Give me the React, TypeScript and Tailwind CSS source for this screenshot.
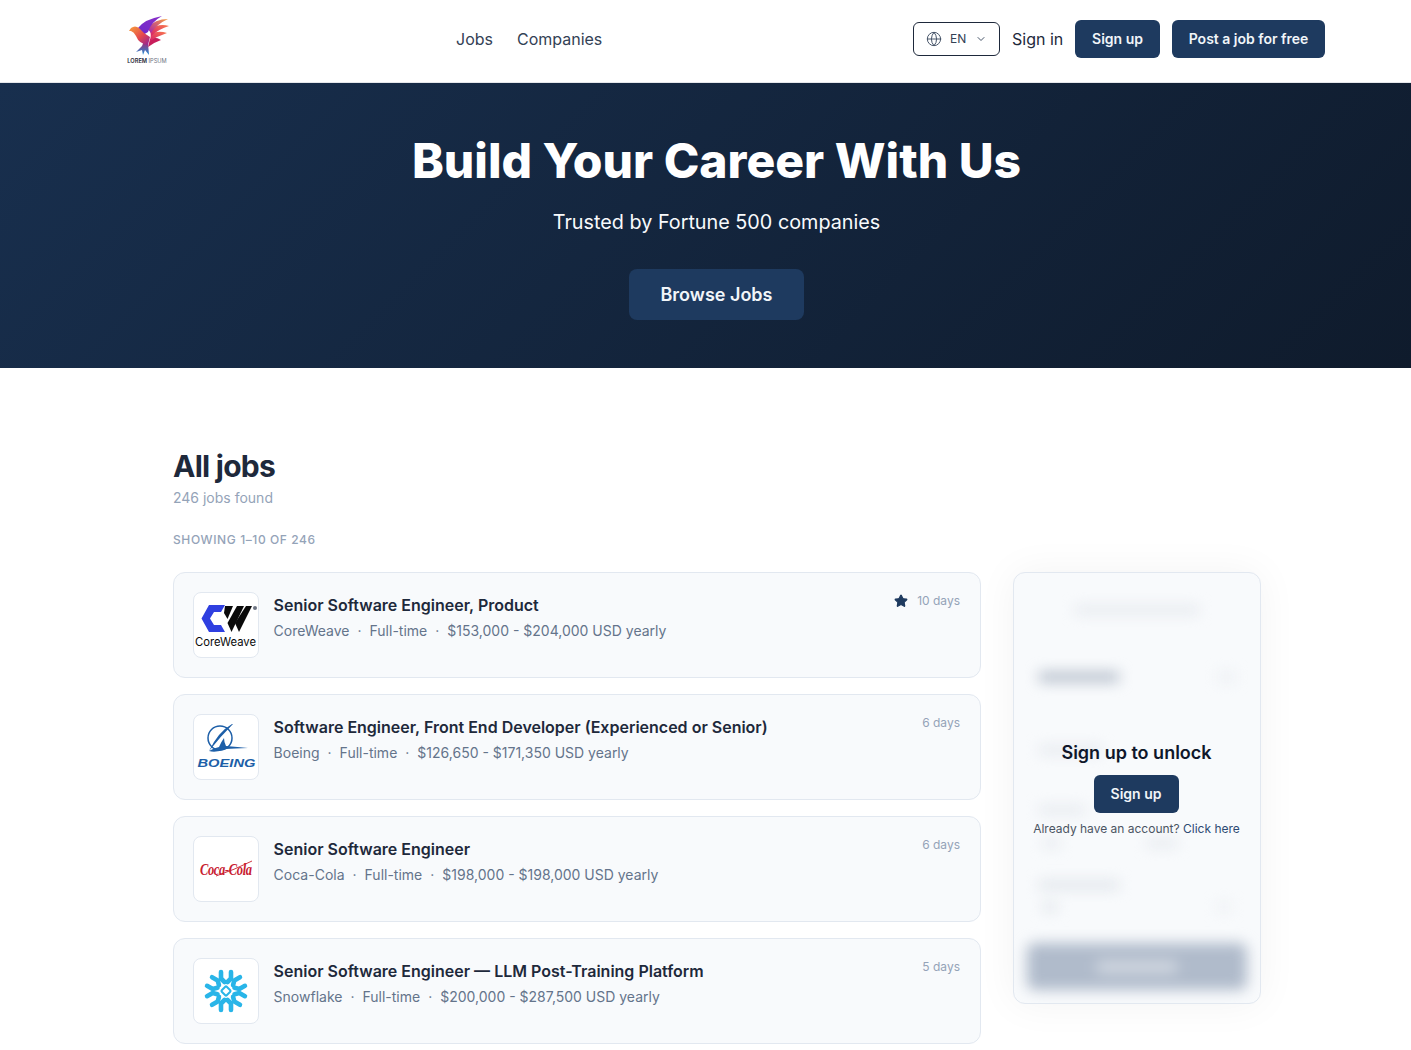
import React from 'react';
import { Globe, ChevronDown, Star } from 'lucide-react';

const Bird = () => (
  <svg viewBox="0 0 48 44" className="w-[48px] h-[44px]">
    <defs>
      <linearGradient id="head" x1="0" y1="0" x2="1" y2="1">
        <stop offset="0" stopColor="#f7a23b" />
        <stop offset="0.55" stopColor="#e5484d" />
        <stop offset="1" stopColor="#8d1f9c" />
      </linearGradient>
      <linearGradient id="f1" x1="0" y1="1" x2="1" y2="0">
        <stop offset="0" stopColor="#6d28c9" />
        <stop offset="1" stopColor="#8b2fc9" />
      </linearGradient>
      <linearGradient id="f2" x1="0" y1="1" x2="1" y2="0">
        <stop offset="0" stopColor="#a21caf" />
        <stop offset="1" stopColor="#f9a03f" />
      </linearGradient>
      <linearGradient id="f3" x1="0" y1="1" x2="1" y2="0">
        <stop offset="0" stopColor="#d61f69" />
        <stop offset="1" stopColor="#f97b4f" />
      </linearGradient>
      <linearGradient id="tail" x1="0" y1="0" x2="0" y2="1">
        <stop offset="0" stopColor="#b3206e" />
        <stop offset="1" stopColor="#1c8fd6" />
      </linearGradient>
    </defs>
    <path d="M25 30 L26 42 L22 37 L20 42 L19 37 L13 39 L19 33 L21 28 Z" fill="url(#tail)" />
    <path d="M27 26 Q32 23 38 27 Q32 29 25 34 Z" fill="#c81e5b" />
    <path d="M28 21 Q35 17 44 20 Q35 23 27 28 Z" fill="url(#f3)" />
    <path d="M27 17 Q35 10 46 13 Q36 16 28 23 Z" fill="url(#f3)" />
    <path d="M24 15 Q32 6 45 6 Q34 11 28 20 Z" fill="url(#f2)" />
    <path d="M15 15 Q22 6 39 3 Q28 9 25 19 L20 22 Z" fill="url(#f1)" />
    <path d="M6 18 L8 15 Q12 12 16 15 Q20 20 27 24 L25 32 Q16 31 13 23 Q11 19 8 18 Z" fill="url(#head)" />
  </svg>
);

const CoreWeaveLogo = () => (
  <svg viewBox="0 0 64 64" className="w-full h-full">
    <path d="M15 12 H31 L27 19 H20 L16 25.5 L20 32 H27 L31 39 H15 L7.5 25.5 Z" fill="#2f3fe0" />
    <path d="M31 13 H39 L33.5 26 L30 20 Z" fill="#0a0a0a" />
    <path d="M43 13 H50 L37.5 39 L33.5 30 Z" fill="#0a0a0a" />
    <path d="M52 13 H58 L45 39 L41 30 Z" fill="#0a0a0a" />
    <circle cx="61" cy="15" r="2" fill="#6b7280" />
    <text x="1" y="53" fontSize="11.5" textLength="61" lengthAdjust="spacingAndGlyphs" fill="#0a0a0a" fontFamily="Inter, sans-serif">CoreWeave</text>
  </svg>
);

const BoeingLogo = () => (
  <svg viewBox="0 0 64 64" className="w-full h-full">
    <circle cx="26" cy="23" r="12" fill="none" stroke="#1d5fa8" strokeWidth="1.5" />
    <path d="M38 9 Q24 17 15 36 Q26 22 39 9 Z" fill="#1d5fa8" />
    <path d="M15 36 Q20 33 25 32 Q27 27 30 23 Q30 27 32 31 Q44 32 54 33 Q40 33.5 32 34 Q22 38 15 36 Z" fill="#1d5fa8" />
    <text x="3.5" y="51.5" fontSize="10" fontWeight="900" fontStyle="italic" textLength="58" lengthAdjust="spacingAndGlyphs" fill="#1d5fa8" fontFamily="Liberation Sans, sans-serif">BOEING</text>
  </svg>
);

const CocaColaLogo = () => (
  <svg viewBox="0 0 64 64" className="w-full h-full">
    <text x="6" y="27" transform="scale(1 1.4)" fontSize="12.5" fontWeight="700" fontStyle="italic" textLength="52" lengthAdjust="spacing" fill="#c8202f" fontFamily="Liberation Serif, serif">Coca-Cola</text>
    <path d="M22 39 Q40 33 58 24" fill="none" stroke="#c8202f" strokeWidth="0.9" />
  </svg>
);

const SnowflakeLogo = () => (
  <svg viewBox="0 0 64 64" className="w-full h-full">
    {[0, 60, 120, 180, 240, 300].map((a) => (
      <g key={a} transform={`rotate(${a} 32 32)`} stroke="#29b5e8" strokeLinecap="round" strokeLinejoin="round" strokeWidth="4.6" fill="none">
        <path d="M27 13 V19.5 L30.5 23" />
        <path d="M37 13 V19.5 L33.5 23" />
      </g>
    ))}
    <rect x="28.5" y="28.5" width="7" height="7" rx="1" transform="rotate(45 32 32)" fill="#fff" stroke="#29b5e8" strokeWidth="2" />
  </svg>
);

const jobs = [
  { title: 'Senior Software Engineer, Product', company: 'CoreWeave', salary: '$153,000 - $204,000 USD yearly', age: '10 days', starred: true, logo: <CoreWeaveLogo /> },
  { title: 'Software Engineer, Front End Developer (Experienced or Senior)', company: 'Boeing', salary: '$126,650 - $171,350 USD yearly', age: '6 days', logo: <BoeingLogo /> },
  { title: 'Senior Software Engineer', company: 'Coca-Cola', salary: '$198,000 - $198,000 USD yearly', age: '6 days', logo: <CocaColaLogo /> },
  { title: 'Senior Software Engineer — LLM Post-Training Platform', company: 'Snowflake', salary: '$200,000 - $287,500 USD yearly', age: '5 days', logo: <SnowflakeLogo /> },
];

const JobCard = ({ job }: { job: (typeof jobs)[number] }) => (
  <div className="flex h-[106px] shrink-0 rounded-xl border border-[#e2e8f0] bg-[#f8fafc] pl-[19px] pr-5 pt-[19px]">
    <div className="w-[66px] h-[66px] shrink-0 rounded-lg border border-[#e2e8f0] bg-white overflow-hidden">
      {job.logo}
    </div>
    <div className="ml-[14.6px] flex-1 pt-[1px]">
      <div className="text-base leading-6 font-semibold text-[#1e293b]">{job.title}</div>
      <div className="text-sm leading-5 text-[#64748b] mt-1 flex">
        <span>{job.company}</span>
        <span className="mx-2">·</span>
        <span>Full-time</span>
        <span className="mx-2">·</span>
        <span>{job.salary}</span>
      </div>
    </div>
    <div className="flex items-start gap-[9px] text-xs leading-4 text-[#94a3b8] pt-[1px]">
      {job.starred && <Star className="w-[14px] h-[14px] mt-[1px] text-[#1e3a5f] fill-[#1e3a5f]" />}
      <span>{job.age}</span>
    </div>
  </div>
);

const Sidebar = () => (
  <div className="relative w-[248px] h-[432px] rounded-xl border border-[#e2e8f0] bg-[#f8fafc] shadow-[0_0_40px_rgba(15,23,42,0.05)] overflow-hidden">
    {/* form behind the lock, only shapes since nothing is readable */}
    <div className="blur-[7px] h-full flex flex-col px-[13px] pb-[13px]">
      <div className="mt-[33px] mx-auto w-[124px] h-2 bg-[#e4e8ed]" />
      <div className="mt-[58px] px-3 flex justify-between">
        <div className="w-[80px] h-[10px] bg-[#b4bdca]" />
        <div className="w-[17px] h-[10px] bg-[#eceff3]" />
      </div>
      <div className="mt-[64px] px-3 w-[63px] box-content h-2 bg-clip-content bg-[#e4e8ed]" />
      <div className="mt-[52px] px-3 w-[46px] box-content h-2 bg-clip-content bg-[#e4e8ed]" />
      <div className="mt-[25px] px-4 flex gap-[87px]">
        <div className="w-[17px] h-2 bg-[#e4e8ed]" />
        <div className="w-[30px] h-2 bg-[#e4e8ed]" />
      </div>
      <div className="mt-[34px] px-3 w-[80px] box-content h-2 bg-clip-content bg-[#dde2e8]" />
      <div className="mt-[14px] px-4 flex justify-between">
        <div className="w-[14px] h-2 bg-[#dde2e8]" />
        <div className="w-[14px] h-2 bg-[#eceff3]" />
      </div>
      <div className="mt-auto h-[47px] rounded-lg bg-[#b0bbcb] flex items-center justify-center">
        <div className="w-[80px] h-[12px] bg-[#d3d9e2]" />
      </div>
    </div>
    <div className="absolute inset-0 flex flex-col items-center pt-[168px] pr-[1px]">
      <div className="text-lg leading-6 font-semibold text-[#0f172a]">Sign up to unlock</div>
      <button className="mt-[10px] mr-[1px] w-[85px] h-[38px] rounded-md bg-[#1e3a5f] text-sm font-semibold text-[#f1f5f9]">Sign up</button>
      <div className="mt-2 text-xs leading-4 text-[#4b5563] whitespace-nowrap">
        Already have an account? <span className="text-[#2d4a73]">Click here</span>
      </div>
    </div>
  </div>
);

export default function App() {
  return (
    <div className="h-screen overflow-hidden bg-white font-['Inter',sans-serif]">
      <header className="h-[83px] border-b border-[#e5e7eb] flex items-center pr-[86px]">
        <div className="w-[456px] pl-[124px] shrink-0 pb-[6px]">
          <div className="w-[46px] flex flex-col items-center">
            <Bird />
            <span className="text-[5.7px] leading-[6px] mt-[1px] whitespace-nowrap font-semibold text-[#1f2937]">
              LOREM <span className="font-normal text-[#6b7280]">IPSUM</span>
            </span>
          </div>
        </div>
        <nav className="flex gap-6 text-base text-[#334155] font-normal pb-[4px]">
          <a>Jobs</a>
          <a>Companies</a>
        </nav>
        <div className="ml-auto flex items-center pb-[5px]">
          <button className="w-[87px] h-[34px] rounded-md border border-[#1e293b] flex items-center pl-[12px] text-xs text-[#334155]">
            <Globe className="w-4 h-4 text-[#475569]" strokeWidth={1.5} />
            <span className="ml-2">EN</span>
            <ChevronDown className="w-3 h-3 ml-[9px] text-[#475569]" />
          </button>
          <a className="ml-3 w-[52px] text-base text-[#1e293b]">Sign in</a>
          <button className="ml-[11px] w-[85px] h-[38px] rounded-md bg-[#1e3a5f] text-sm font-semibold text-[#f1f5f9]">Sign up</button>
          <button className="ml-3 w-[153px] h-[38px] rounded-md bg-[#1e3a5f] text-sm font-semibold text-[#f1f5f9]">Post a job for free</button>
        </div>
      </header>

      <section className="h-[285px] bg-[linear-gradient(135deg,#182f4e,#0f1b2c)] pl-[22px] pt-[48px] flex flex-col items-center">
        <h1 className="text-5xl leading-[60px] font-extrabold text-white">Build Your Career With Us</h1>
        <p className="mt-[17px] text-[19.8px] leading-7 text-[#f8fafc]">Trusted by Fortune 500 companies</p>
        <button className="mt-[33px] w-[175px] h-[51px] rounded-lg bg-[#1e3a5f] text-lg font-semibold text-[#f1f5f9]">Browse Jobs</button>
      </section>

      <main className="ml-[173px] w-[1088px] pt-20">
        <h2 className="text-3xl leading-9 font-bold tracking-tight text-[#1e293b]">All jobs</h2>
        <p className="mt-1 text-sm leading-5 text-[#94a3b8]">246 jobs found</p>
        <p className="mt-6 text-xs leading-4 font-medium tracking-wider text-[#94a3b8]">SHOWING 1–10 OF 246</p>
        <div className="mt-6 flex gap-8 items-start">
          <div className="w-[808px] flex flex-col gap-4">
            {jobs.map((job) => (
              <JobCard key={job.company} job={job} />
            ))}
          </div>
          <Sidebar />
        </div>
      </main>
    </div>
  );
}
